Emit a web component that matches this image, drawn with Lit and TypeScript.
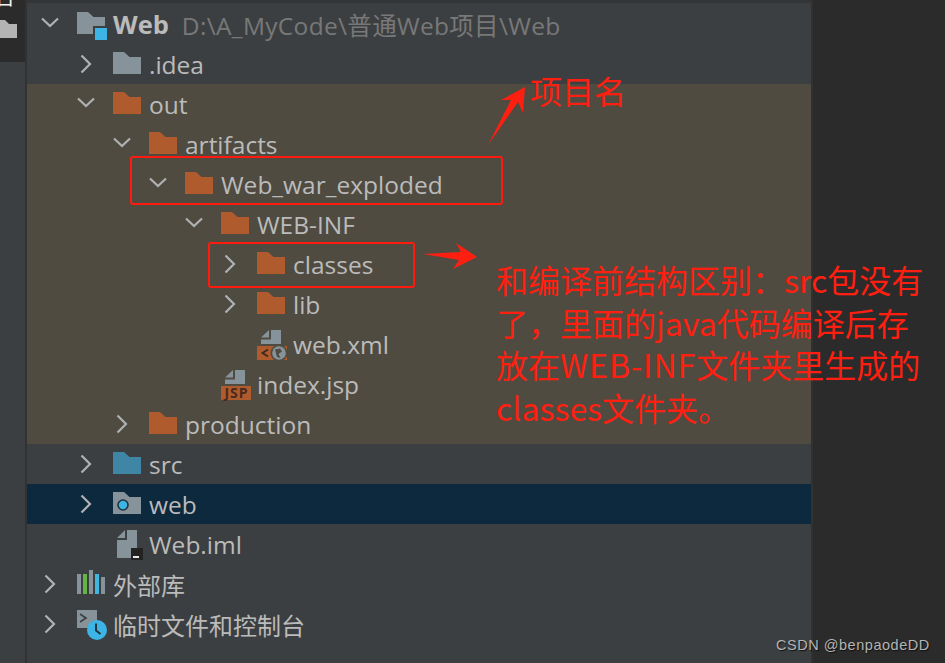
import { LitElement, html, css, svg } from "lit";
import { customElement } from "lit/decorators.js";

const GRAY = "#87939a";
const ORANGE = "#b05b2d";
const folder = (c: string) => svg`<path d="M0 7H11L16.500 12H28V29H0Z" fill=${c}/>`;
const page = svg`<path d="M4 12.500L12 5V12.500Z" fill=${GRAY}/><path d="M14 5H24V19H4V14.500H14Z" fill=${GRAY}/>`;

const icons: Record<string, unknown> = {
  root: svg`<path d="M0 7H11L16.500 12H28V29H0Z" fill=${GRAY}/><rect x="16" y="21" width="16" height="16" fill="#3c3f41"/><rect x="18" y="23" width="12" height="12" fill="#3db4e6"/>`,
  gray: folder(GRAY),
  orange: folder(ORANGE),
  blue: folder("#3f85a5"),
  web: svg`${folder(GRAY)}<circle cx="10" cy="20" r="5" fill="#3db4e6" stroke="#1f3340" stroke-width="1.600"/>`,
  xml: svg`${page}<rect x="0" y="21" width="30" height="14" fill=${ORANGE}/><path d="M11 24.500L5.500 28L11 31.500" fill="none" stroke="#3a2a20" stroke-width="1.800"/><circle cx="22" cy="28" r="8.500" fill="#4f4b41"/><circle cx="22" cy="28" r="6.800" fill=${GRAY}/><path d="M18 24.500L23 23.500L25 26.500L21.500 29L23.500 33L20 32Z" fill="#4f4b41"/>`,
  jsp: svg`${page}<rect x="0" y="21" width="30" height="14" fill=${ORANGE}/><text x="15.500" y="33" text-anchor="middle" font-family="'Open Sans',sans-serif" font-weight="700" font-size="14" letter-spacing="1" fill="#4a2a1a">JSP</text>`,
  iml: svg`<path d="M4 13L12 5V13Z" fill=${GRAY}/><path d="M14 5H24V33H4V15H14Z" fill=${GRAY}/><rect x="18" y="23" width="12" height="12" fill="#242222"/><rect x="20" y="31" width="6" height="2" fill="#e8e8e8"/>`,
  lib: svg`<rect x="0" y="9" width="4" height="20" fill=${GRAY}/><rect x="6" y="9" width="4" height="20" fill="#62b543"/><rect x="12" y="5" width="4" height="24" fill=${GRAY}/><rect x="18" y="9" width="4" height="20" fill="#40b6e0"/><rect x="24" y="12" width="4" height="17" fill=${GRAY}/>`,
  scratch: svg`<rect x="0" y="5" width="20" height="18" fill=${GRAY}/><path d="M3 9L9 13L3 17" fill="none" stroke="#3c3f41" stroke-width="1.600"/><circle cx="20" cy="25" r="10" fill="#3db4e6"/><path d="M19 18.500V25.500L23.500 29" fill="none" stroke="#28343c" stroke-width="2"/>`,
};

interface Row {
  d: number;
  chev?: "down" | "right";
  icon: string;
  text: string;
  band?: boolean;
  sel?: boolean;
  path?: string;
  bold?: boolean;
}

const rows: Row[] = [
  { d: 0, chev: "down", icon: "root", text: "Web", bold: true, path: "D:\\A_MyCode\\普通Web项目\\Web" },
  { d: 1, chev: "right", icon: "gray", text: ".idea" },
  { d: 1, chev: "down", icon: "orange", text: "out", band: true },
  { d: 2, chev: "down", icon: "orange", text: "artifacts", band: true },
  { d: 3, chev: "down", icon: "orange", text: "Web_war_exploded", band: true },
  { d: 4, chev: "down", icon: "orange", text: "WEB-INF", band: true },
  { d: 5, chev: "right", icon: "orange", text: "classes", band: true },
  { d: 5, chev: "right", icon: "orange", text: "lib", band: true },
  { d: 5, icon: "xml", text: "web.xml", band: true },
  { d: 4, icon: "jsp", text: "index.jsp", band: true },
  { d: 2, chev: "right", icon: "orange", text: "production", band: true },
  { d: 1, chev: "right", icon: "blue", text: "src" },
  { d: 1, chev: "right", icon: "web", text: "web", sel: true },
  { d: 1, icon: "iml", text: "Web.iml" },
  { d: 0, chev: "right", icon: "lib", text: "外部库" },
  { d: 0, chev: "right", icon: "scratch", text: "临时文件和控制台" },
];

const chevron = (k?: string) =>
  k
    ? html`<svg class="chev" width="20" height="20" viewBox="0 0 20 20">
        <path d=${k === "down" ? "M2 4.500L10 12L18 4.500" : "M5.500 1.500L14 10L5.500 18.500"} fill="none" stroke="#afb1b3" stroke-width="2.200"/>
      </svg>`
    : null;

@customElement("app-root")
export class AppRoot extends LitElement {
  static styles = css`
    :host {
      display: flex;
      width: 945px;
      height: 663px;
      overflow: hidden;
      position: relative;
      background: #2b2b2b;
      font-family: "Open Sans", "Noto Sans CJK SC", sans-serif;
      color: #bbbbbb;
    }
    .gutter {
      width: 25px;
      flex: none;
      display: flex;
      flex-direction: column;
      background: #3c3f41;
    }
    .gutter .dark {
      height: 62px;
      background: #2b2b2b;
      overflow: hidden;
    }
    .glyph {
      display: block;
      color: #f2f2f2;
      font: 20px/20px "Noto Sans CJK SC", sans-serif;
      margin: -13px 0 0 -5px;
      height: 20px;
    }
    .gfolder {
      display: block;
      margin: 13px 0 0 0;
    }
    .sep {
      width: 2px;
      flex: none;
      background: #323232;
    }
    .panel {
      width: 784px;
      flex: none;
      background: #3c3f41;
      box-sizing: border-box;
      border-top: 3px solid #333537;
      padding-top: 1px;
    }
    .sep2 {
      width: 2px;
      flex: none;
      background: #313131;
    }
    .row {
      height: 40px;
      display: flex;
      align-items: center;
      white-space: nowrap;
      font-size: 24.500px;
    }
    .row.band {
      background: #4f4b41;
    }
    .row.sel {
      background: #0d293e;
    }
    .slot {
      width: 45px;
      flex: none;
      display: flex;
      padding-left: 8px;
      box-sizing: border-box;
    }
    .chev {
      display: block;
    }
    .icon {
      width: 28px;
      height: 40px;
      flex: none;
      overflow: visible;
      display: block;
      margin: 2px 8px 0 0;
    }
    .cjk {
      font-size: 24px;
    }
    .bold {
      font-weight: 700;
      font-size: 25.500px;
    }
    .path {
      color: #787878;
      margin-left: 13px;
      letter-spacing: 0.320px;
    }
    .box {
      position: absolute;
      border: 2px solid #ff1a10;
      border-radius: 3px;
      box-sizing: border-box;
    }
    .b1 {
      left: 130px;
      top: 156px;
      width: 373px;
      height: 49px;
    }
    .b2 {
      left: 208px;
      top: 242px;
      width: 207px;
      height: 46px;
    }
    .arrows {
      position: absolute;
      left: 0;
      top: 0;
    }
    .note {
      position: absolute;
      color: #ff1f10;
      font-family: "Noto Sans CJK SC", sans-serif;
      font-size: 32px;
    }
    .n1 {
      left: 530px;
      top: 67px;
      line-height: 46px;
    }
    .n2 {
      left: 496px;
      top: 258px;
      width: 435px;
      line-height: 42.700px;
    }
    .wide {
      letter-spacing: 1px;
    }
    .mark {
      position: absolute;
      left: 776px;
      top: 636px;
      font: 14.500px/18px "Liberation Sans", sans-serif;
      color: #b4b4b4;
      text-shadow: 1px 1px 1px #111;
      letter-spacing: 0.530px;
    }
  `;

  render() {
    return html`
      <div class="gutter">
        <div class="dark">
          <span class="glyph">台</span>
          <svg class="gfolder" width="17" height="18" viewBox="0 0 17 18"><path d="M0 0H5L9 4H17V18H0Z" fill="#b4b4b4"/></svg>
        </div>
      </div>
      <div class="sep"></div>
      <div class="panel">
        ${rows.map(
          (r) => html`<div class="row ${r.band ? "band" : ""} ${r.sel ? "sel" : ""}" style="padding-left:${5 + 36 * r.d}px">
            <div class="slot">${chevron(r.chev)}</div>
            <svg class="icon" viewBox="0 0 28 40">${icons[r.icon]}</svg>
            <span class=${r.bold ? "bold" : r.icon === "lib" || r.icon === "scratch" ? "cjk" : ""}>${r.text}</span>
            ${r.path ? html`<span class="path">${r.path}</span>` : null}
          </div>`
        )}
      </div>
      <div class="sep2"></div>
      <div class="box b1"></div>
      <div class="box b2"></div>
      <svg class="arrows" width="945" height="663" viewBox="0 0 945 663">
        <path d="M488 145L511 100L501 100L525 87L523 113L518 102Z" fill="#ff1f10"/>
        <path d="M423 254L461 252L456 243L477 257L453 269L459 260Z" fill="#ff1f10"/>
      </svg>
      <div class="note n1">项目名</div>
      <div class="note n2">和编译前结构区别：src包没有了，里面的java代码编译后存放在<span class="wide">WEB-INF</span>文件夹里生成的classes文件夹。</div>
      <div class="mark">CSDN @benpaodeDD</div>
    `;
  }
}
